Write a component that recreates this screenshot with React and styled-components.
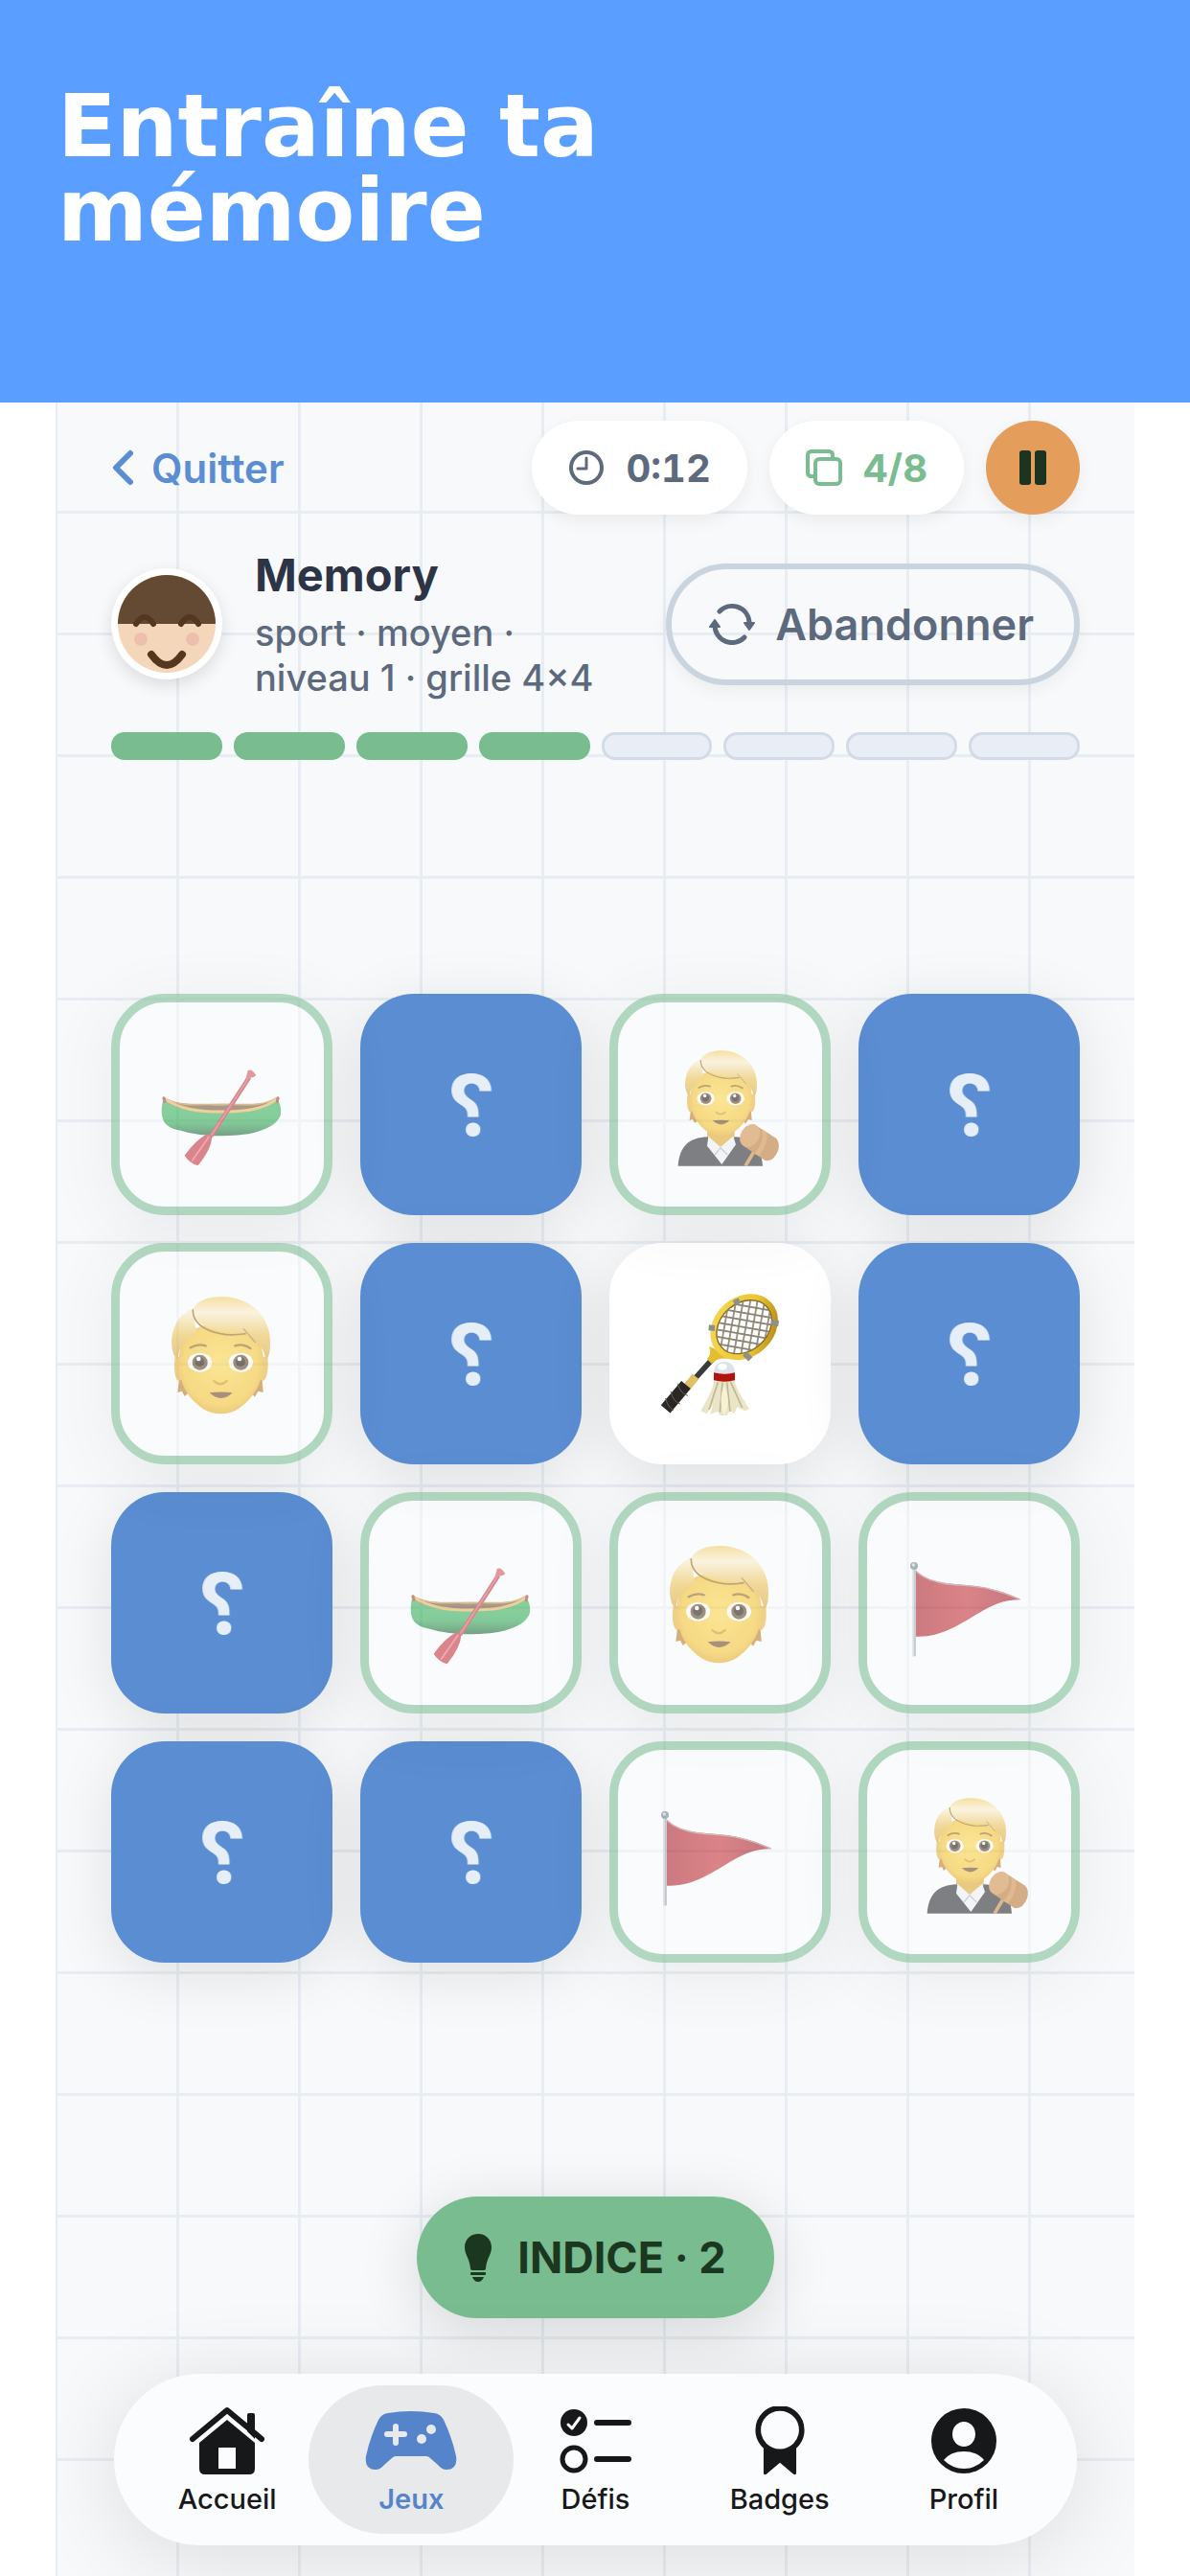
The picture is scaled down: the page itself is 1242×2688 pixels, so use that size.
import React from "react";
import styled, { createGlobalStyle } from "styled-components";

const CARDS = [
  { id: 1, face: "canoe", status: "matched" },
  { id: 2, face: "ball", status: "hidden" },
  { id: 3, face: "judge", status: "matched" },
  { id: 4, face: "medal", status: "hidden" },
  { id: 5, face: "person", status: "matched" },
  { id: 6, face: "ski", status: "hidden" },
  { id: 7, face: "badminton", status: "open" },
  { id: 8, face: "medal", status: "hidden" },
  { id: 9, face: "ball", status: "hidden" },
  { id: 10, face: "canoe", status: "matched" },
  { id: 11, face: "person", status: "matched" },
  { id: 12, face: "flag", status: "matched" },
  { id: 13, face: "badminton", status: "hidden" },
  { id: 14, face: "ski", status: "hidden" },
  { id: 15, face: "flag", status: "matched" },
  { id: 16, face: "judge", status: "matched" }
];

const TABS = [
  { label: "Accueil", Icon: HomeIcon },
  { label: "Jeux", Icon: GamepadIcon, active: true },
  { label: "Défis", Icon: ChecklistIcon },
  { label: "Badges", Icon: RosetteIcon },
  { label: "Profil", Icon: ProfileIcon }
];

const PAIRS = 8;
const FOUND = 4;

export default function App() {
  return (
    <SPage>
      <GlobalStyle />
      <SBanner>
        <h1>
          Entraîne ta
          <br />
          mémoire
        </h1>
      </SBanner>
      <SScreen>
        <STopBar>
          <SBackBtn type="button">
            <ChevronIcon />
            Quitter
          </SBackBtn>
          <SStats>
            <SPill>
              <ClockIcon />
              0:12
            </SPill>
            <SPill $green>
              <CopyIcon />
              4/8
            </SPill>
            <SPauseBtn type="button" aria-label="Pause">
              <PauseIcon />
            </SPauseBtn>
          </SStats>
        </STopBar>
        <SGameInfo>
          <SAvatar>
            <AvatarFace />
          </SAvatar>
          <SInfoText>
            <h2>Memory</h2>
            <p>
              sport · moyen ·
              <br />
              niveau 1 · grille 4×4
            </p>
          </SInfoText>
          <SQuitBtn type="button">
            <RefreshIcon />
            Abandonner
          </SQuitBtn>
        </SGameInfo>
        <SProgress
          role="progressbar"
          aria-label="Paires trouvées"
          aria-valuemin={0}
          aria-valuemax={PAIRS}
          aria-valuenow={FOUND}
        >
          {Array.from({ length: PAIRS }, (_, i) => (
            <SStep key={i} $done={i < FOUND} />
          ))}
        </SProgress>
        <SBoardArea>
          <SBoard>
            {CARDS.map(card => (
              <MemoryCard key={card.id} {...card} />
            ))}
          </SBoard>
        </SBoardArea>
        <SHintBtn type="button">
          <BulbIcon />
          INDICE · 2
        </SHintBtn>
        <STabBar>
          {TABS.map(({ label, Icon, active }) => (
            <STab
              key={label}
              type="button"
              $active={active}
              aria-current={active ? "page" : undefined}
            >
              <Icon />
              {label}
            </STab>
          ))}
        </STabBar>
      </SScreen>
    </SPage>
  );
}

function MemoryCard({ face, status }) {
  if (status === "hidden") {
    return (
      <SHiddenCard type="button">
        <span>?</span>
      </SHiddenCard>
    );
  }
  const Picture = PICTURES[face];
  return (
    <SOpenCard type="button" aria-label={face} $matched={status === "matched"}>
      <Picture />
    </SOpenCard>
  );
}

/* ---------- card pictures ---------- */

function CanoePicture() {
  return (
    <svg viewBox="0 0 384 384">
      <defs>
        <linearGradient id="hull" x1="0" y1="0" x2="0" y2="1">
          <stop offset="0" stopColor="#2fae54" />
          <stop offset="0.6" stopColor="#27a84c" />
          <stop offset="1" stopColor="#0b5a26" />
        </linearGradient>
      </defs>
      <path d="M8 176C70 196 300 200 366 176L340 206Q190 226 40 206Z" fill="#6d4a2b" />
      <path
        d="M6 178C0 204 0 232 12 248C28 266 44 268 62 272C130 294 258 294 312 272C346 262 364 246 374 226C378 206 374 190 366 178C310 206 260 216 190 216C116 216 56 208 6 178Z"
        fill="url(#hull)"
      />
      <path d="M10 170C60 198 110 190 190 190C270 190 318 198 362 170" fill="none" stroke="#c48a34" strokeWidth="5" />
      <path d="M9 172C58 206 120 213 190 213C262 213 322 206 366 172" fill="none" stroke="#e9b04e" strokeWidth="9" strokeLinecap="round" />
      <path d="M9 170L12 182M366 170L364 182" stroke="#8c3a2a" strokeWidth="9" strokeLinecap="round" />
      <path d="M276 106L156 290" stroke="#b92d38" strokeWidth="14" />
      <path d="M274 108L158 286" stroke="#e0606a" strokeWidth="4" />
      <path d="M266 108L272 84Q286 78 298 100Q290 108 276 108L270 116Z" fill="#d04a55" />
      <path d="M146 282L160 292Q158 330 116 382Q88 374 74 350Q108 302 146 282Z" fill="#c32532" />
      <path d="M150 292L98 366" stroke="#e5717a" strokeWidth="5" strokeLinecap="round" />
    </svg>
  );
}

function Head() {
  return (
    <g>
      <defs>
        <radialGradient id="skin" cx="0.5" cy="0.45" r="0.6">
          <stop offset="0" stopColor="#ffd640" />
          <stop offset="0.75" stopColor="#f6c024" />
          <stop offset="1" stopColor="#dc9a12" />
        </radialGradient>
        <linearGradient id="hair" x1="0" y1="0" x2="0" y2="1">
          <stop offset="0" stopColor="#f4cd5c" />
          <stop offset="0.25" stopColor="#fdeecb" />
          <stop offset="0.6" stopColor="#edc04a" />
          <stop offset="1" stopColor="#d9a12c" />
        </linearGradient>
      </defs>
      <path d="M58 262L52 312L66 308L74 324L96 306ZM316 262L320 312L304 308L294 326L276 306Z" fill="#b87414" />
      <path d="M44 200C38 240 44 272 56 276L68 270L66 200ZM334 200C338 240 332 272 320 276L308 270L310 200Z" fill="#eab02c" />
      <path
        d="M188 96C110 96 56 130 56 212C56 296 92 334 130 362C166 384 210 384 244 362C284 332 320 292 320 212C320 130 266 96 188 96Z"
        fill="url(#skin)"
      />
      <path
        d="M98 52C116 22 150 12 190 12C280 12 344 76 342 158C342 190 336 206 328 208C324 180 312 162 294 152L288 138L290 158L266 128C200 128 130 110 108 82C102 96 112 112 112 130L102 126L102 142L86 140C66 158 56 178 52 208C34 196 32 160 34 144C38 96 64 62 98 52Z"
        fill="url(#hair)"
      />
      <path d="M100 52C98 92 134 118 186 128C214 134 240 132 266 128" fill="none" stroke="#8e6216" strokeWidth="5" />
      <path d="M258 112L296 156" stroke="#a87820" strokeWidth="4" />
      <path d="M92 172Q116 158 140 166M232 166Q256 158 280 174" fill="none" stroke="#8a5c10" strokeWidth="7" strokeLinecap="round" />
      <Eye cx={122} />
      <Eye cx={250} />
      <path d="M166 276Q186 296 206 276" fill="none" stroke="#cf8f10" strokeWidth="7" strokeLinecap="round" />
      <path d="M152 313Q188 308 224 313Q206 330 188 330Q170 330 152 313Z" fill="#6b3a18" />
    </g>
  );
}

function Eye({ cx }) {
  return (
    <>
      <ellipse cx={cx} cy="218" rx="38" ry="30" fill="#fffdf4" />
      <circle cx={cx} cy="218" r="24" fill="#5a3a14" />
      <circle cx={cx - 1} cy="216" r="15" fill="#120800" />
      <circle cx={cx - 4} cy="207" r="7" fill="#fff" />
    </>
  );
}

function PersonPicture() {
  return (
    <svg viewBox="0 0 384 384">
      <Head />
    </svg>
  );
}

function JudgePicture() {
  return (
    <svg viewBox="0 0 384 384">
      <path d="M150 260H236V320L192 370L150 320Z" fill="#dfa31c" />
      <path d="M59 383C64 322 92 294 152 292L196 376L236 292C296 294 320 324 324 383Z" fill="#1c1c20" />
      <path d="M154 290L192 324L232 290L240 316L196 378L150 320Z" fill="#eef0f4" />
      <path d="M192 326L174 348M192 326L214 348" stroke="#a9adb8" strokeWidth="4" />
      <g transform="translate(57 13) scale(0.728)">
        <Head />
      </g>
      <path d="M298 336L270 383" stroke="#c98232" strokeWidth="11" />
      <path d="M300 254L366 296Q380 310 372 336Q358 370 332 366L266 322Z" fill="#b8702a" />
      <path d="M322 268L336 278Q344 310 312 352L298 344Q330 310 322 268Z" fill="#cf8538" />
      <ellipse cx="284" cy="288" rx="29" ry="38" transform="rotate(32 284 288)" fill="#d08a3e" />
    </svg>
  );
}

function BadmintonPicture() {
  return (
    <svg viewBox="0 0 384 384">
      <defs>
        <pattern id="strings" width="22" height="22" patternUnits="userSpaceOnUse" patternTransform="rotate(52)">
          <path d="M0 11H22M11 0V22" stroke="#8d8573" strokeWidth="5" />
        </pattern>
        <linearGradient id="frame" x1="0" y1="0" x2="1" y2="1">
          <stop offset="0" stopColor="#f6d858" />
          <stop offset="0.6" stopColor="#ecc634" />
          <stop offset="1" stopColor="#a67c12" />
        </linearGradient>
      </defs>
      <path d="M170 204L98 284" stroke="#3a3a3a" strokeWidth="17" />
      <path d="M156 168Q166 192 150 208L164 222Q180 202 216 206L200 186Z" fill="#e5bd30" />
      <path d="M114 262L88 294" stroke="#e0c066" strokeWidth="26" />
      <path d="M84 288L20 364" stroke="#2b2725" strokeWidth="38" strokeLinejoin="round" />
      <path d="M58 284Q66 316 90 322M36 308Q44 342 66 348M20 330Q26 356 44 368" fill="none" stroke="#6a625c" strokeWidth="3" />
      <g transform="rotate(-42 266 107)">
        <ellipse cx="266" cy="107" rx="110" ry="89" fill="#fff" />
        <ellipse cx="266" cy="107" rx="105" ry="84" fill="none" stroke="url(#frame)" strokeWidth="19" />
        <ellipse cx="266" cy="107" rx="95" ry="74" fill="none" stroke="#84671b" strokeWidth="4" />
      </g>
      <ellipse cx="266" cy="107" rx="94" ry="73" transform="rotate(-42 266 107)" fill="url(#strings)" />
      <path d="M234 32L252 24M351 92L374 96M155 109L174 111M268 190L286 208" stroke="#8f9189" strokeWidth="18" />
      <path d="M172 276C166 310 142 346 130 370L148 378L168 352L160 380L184 372L190 384L212 384L222 370L236 378L244 358L268 370L282 364C262 330 244 306 236 276Z" fill="#e9e5c6" />
      <path d="M184 280L156 366M198 280L190 374M212 280L222 372M224 280L260 360" stroke="#bdb997" strokeWidth="5" />
      <path d="M204 290C190 320 190 350 204 384C220 350 218 320 204 290Z" fill="#f7f3d2" />
      <path d="M171 254C170 228 184 215 204 215C224 215 238 228 237 254Z" fill="#dfe2ea" />
      <ellipse cx="198" cy="232" rx="14" ry="10" fill="#fff" />
      <path d="M171 250Q204 258 237 250V274Q204 282 171 274Z" fill="#b3130f" />
    </svg>
  );
}

function FlagPicture() {
  return (
    <svg viewBox="0 0 384 384">
      <defs>
        <linearGradient id="cloth" x1="0" y1="0" x2="1" y2="0">
          <stop offset="0" stopColor="#a8141c" />
          <stop offset="0.5" stopColor="#c4242b" />
          <stop offset="1" stopColor="#981018" />
        </linearGradient>
      </defs>
      <path
        d="M24 90C50 114 80 124 124 130C180 136 220 136 256 146C296 156 326 166 353 181C300 180 268 196 232 216C172 250 108 300 24 296Z"
        fill="url(#cloth)"
      />
      <path d="M26 94C50 116 80 126 124 132C180 138 220 138 256 148C296 158 322 168 346 179" fill="none" stroke="#b88084" strokeWidth="4" />
      <path d="M13 80H24V358H13Z" fill="#a4a9b0" />
      <path d="M15 84V358" stroke="#dfe2e6" strokeWidth="4" />
      <circle cx="18" cy="75" r="12" fill="#6d7a84" />
      <circle cx="16" cy="72" r="5" fill="#d5dbe0" />
    </svg>
  );
}

const PICTURES = {
  canoe: CanoePicture,
  person: PersonPicture,
  judge: JudgePicture,
  badminton: BadmintonPicture,
  flag: FlagPicture
};

function AvatarFace() {
  return (
    <svg width="102" height="102" viewBox="0 0 102 102">
      <clipPath id="avatarClip">
        <circle cx="51" cy="51" r="51" />
      </clipPath>
      <g clipPath="url(#avatarClip)">
        <rect width="102" height="102" fill="#f4d6ba" />
        <rect width="102" height="51" fill="#644a33" />
      </g>
      <g fill="none" stroke="#553720" strokeLinecap="round">
        <path d="M19 51Q28 37 37 51M66 51Q75 37 84 51" strokeWidth="6" />
        <path d="M35 83Q51 105 67 83" strokeWidth="8" />
      </g>
      <circle cx="24" cy="67" r="7" fill="#efbfae" />
      <circle cx="78" cy="67" r="7" fill="#efbfae" />
    </svg>
  );
}

/* ---------- icons ---------- */

function ChevronIcon() {
  return (
    <svg width="24" height="38" viewBox="0 0 24 38" fill="none" stroke="currentColor" strokeWidth="6" strokeLinecap="round" strokeLinejoin="round">
      <path d="M20 4L5 19L20 34" />
    </svg>
  );
}

function ClockIcon() {
  return (
    <svg width="38" height="38" viewBox="0 0 38 38" fill="none" stroke="currentColor" strokeLinecap="round" strokeLinejoin="round">
      <circle cx="19" cy="19" r="16" strokeWidth="4" />
      <path d="M19 9V20H10" strokeWidth="3" />
    </svg>
  );
}

function CopyIcon() {
  return (
    <svg width="38" height="38" viewBox="0 0 38 38" fill="none" stroke="currentColor" strokeWidth="4" strokeLinejoin="round">
      <rect x="10" y="10" width="26" height="26" rx="4" />
      <path d="M10 28H6Q2 28 2 24V6Q2 2 6 2H24Q28 2 28 6V10" />
    </svg>
  );
}

function PauseIcon() {
  return (
    <svg width="28" height="36" viewBox="0 0 28 36" fill="currentColor">
      <rect width="12" height="36" rx="3" />
      <rect x="16" width="12" height="36" rx="3" />
    </svg>
  );
}

function RefreshIcon() {
  return (
    <svg width="50" height="44" viewBox="0 0 50 44" fill="none" stroke="currentColor" strokeWidth="5" strokeLinecap="round">
      <path d="M12 9A18 18 0 0 1 43 20M38 36A18 18 0 0 1 7 24" />
      <path d="M38 21H48L43 28ZM2 25H12L7 18Z" fill="currentColor" strokeWidth="2" strokeLinejoin="round" />
    </svg>
  );
}

function BulbIcon() {
  return (
    <svg width="28" height="50" viewBox="0 0 28 50" fill="currentColor">
      <path d="M14 0C22 0 28 6 28 14C28 22 23 25 22 36Q22 38 20 38H8Q6 38 6 36C5 25 0 22 0 14C0 6 6 0 14 0Z" />
      <rect x="6" y="40" width="16" height="3" rx="1" />
      <path d="M8 45H20Q18 50 14 50T8 45Z" />
    </svg>
  );
}

function HomeIcon() {
  return (
    <svg width="80" height="72" viewBox="0 0 80 72">
      <path d="M61 26V9Q61 7 63 7H67Q69 7 69 9V34Z" fill="currentColor" />
      <path d="M4 34L40 4L76 34" fill="none" stroke="currentColor" strokeWidth="6" strokeLinecap="round" strokeLinejoin="round" />
      <path
        fillRule="evenodd"
        d="M40 14L69 38V65Q69 71 63 71H17Q11 71 11 65V38ZM31 43V65H49V43Z"
        fill="currentColor"
      />
    </svg>
  );
}

function GamepadIcon() {
  return (
    <svg width="96" height="72" viewBox="0 0 96 72">
      <path
        d="M24 7Q48 3 72 7Q79 8 82 14Q91 33 95 52Q97 66 85 66Q80 66 76 61L68 54Q66 52 64 52H32Q30 52 28 54L20 61Q16 66 11 66Q-1 66 1 52Q5 33 14 14Q17 8 24 7Z"
        fill="currentColor"
      />
      <g fill="none" stroke="#e8e9eb" strokeWidth="6" strokeLinecap="round">
        <path d="M32 21V38M23 29H41" />
      </g>
      <circle cx="69" cy="24" r="5" fill="#e8e9eb" />
      <circle cx="59" cy="34" r="5" fill="#e8e9eb" />
    </svg>
  );
}

function ChecklistIcon() {
  return (
    <svg width="76" height="72" viewBox="0 0 76 72" fill="none" stroke="currentColor" strokeLinecap="round" strokeLinejoin="round">
      <circle cx="15" cy="17" r="14" fill="currentColor" stroke="none" />
      <path d="M9 19L13 23L21 12" stroke="#fff" strokeWidth="3" />
      <path d="M39 17H72M39 55H72" strokeWidth="6" />
      <circle cx="15" cy="55" r="12" strokeWidth="5" />
    </svg>
  );
}

function RosetteIcon() {
  return (
    <svg width="54" height="72" viewBox="0 1 54 76">
      <path d="M9 42H45V74Q45 78 41 75L27 63L13 75Q9 78 9 74Z" fill="currentColor" />
      <circle cx="27" cy="27" r="24" fill="#fbfcfe" stroke="currentColor" strokeWidth="6" />
    </svg>
  );
}

function ProfileIcon() {
  return (
    <svg width="68" height="72" viewBox="0 0 68 72">
      <circle cx="34" cy="36" r="34" fill="currentColor" />
      <ellipse cx="34" cy="29" rx="12" ry="13" fill="#fbfcfe" />
      <path d="M13 56Q20 47 34 47T55 56Q46 65 34 65T13 56Z" fill="#fbfcfe" />
    </svg>
  );
}

/* ---------- styles ---------- */

const GlobalStyle = createGlobalStyle`
  * {
    box-sizing: border-box;
  }
  body {
    margin: 0;
    background: #fff;
    font-family: Inter, "Liberation Sans", sans-serif;
  }
  h1, h2, p {
    margin: 0;
  }
  button {
    padding: 0;
    border: none;
    background: none;
    font-family: inherit;
    cursor: pointer;
  }
  svg {
    display: block;
    flex-shrink: 0;
  }
`;

const SPage = styled.div`
  display: flex;
  flex-direction: column;
  min-height: 100vh;
`;

const SBanner = styled.header`
  min-height: 420px;
  padding: 88px 60px;
  background: #5a9fff;
  h1 {
    color: #fff;
    font-family: "DejaVu Sans", sans-serif;
    font-size: 90px;
    font-weight: 700;
    line-height: 88px;
  }
`;

const SScreen = styled.main`
  flex: 1;
  display: flex;
  flex-direction: column;
  margin: 0 58px;
  padding: 19px 57px 32px 58px;
  overflow: hidden;
  background-color: #f7f9fb;
  background-image: linear-gradient(#e7edf2 3px, transparent 3px),
    linear-gradient(90deg, #e7edf2 3px, transparent 3px);
  background-size: 127px 127px;
  background-position: -1px 113px;
`;

const STopBar = styled.div`
  display: flex;
  align-items: center;
  justify-content: space-between;
`;

const SBackBtn = styled.button`
  display: flex;
  align-items: center;
  gap: 18px;
  color: #5b8dd2;
  font-size: 42px;
  font-weight: 600;
`;

const SStats = styled.div`
  display: flex;
  gap: 23px;
`;

const SPill = styled.div`
  display: flex;
  align-items: center;
  gap: 22px;
  height: 98px;
  padding: 0 38px;
  border-radius: 49px;
  background: #fff;
  box-shadow: 0 6px 18px rgba(0, 0, 0, 0.06);
  color: ${props => (props.$green ? "#79bc90" : "#5d6a7d")};
  font-size: 40px;
  font-weight: 700;
  font-variant-numeric: tabular-nums;
`;

const SPauseBtn = styled.button`
  display: flex;
  align-items: center;
  justify-content: center;
  width: 98px;
  height: 98px;
  border-radius: 50%;
  background: #e49d5b;
  box-shadow: 0 6px 18px rgba(0, 0, 0, 0.06);
  color: #1d3520;
`;

const SGameInfo = styled.section`
  display: flex;
  align-items: center;
  margin-top: 34px;
`;

const SAvatar = styled.div`
  padding: 7px;
  border-radius: 50%;
  background: #fff;
  box-shadow: 0 6px 18px rgba(0, 0, 0, 0.12);
`;

const SInfoText = styled.div`
  flex: 1;
  margin-left: 34px;
  h2 {
    margin-bottom: 8px;
    color: #2c3446;
    font-size: 47px;
    font-weight: 700;
    line-height: 58px;
  }
  p {
    color: #5d6a7d;
    font-size: 38px;
    font-weight: 500;
    line-height: 47px;
    white-space: nowrap;
  }
`;

const SQuitBtn = styled.button`
  display: flex;
  align-items: center;
  gap: 20px;
  height: 127px;
  padding: 0 42px 0 38px;
  border: 6px solid #c9d4df;
  border-radius: 64px;
  box-shadow: 0 6px 18px rgba(0, 0, 0, 0.05);
  color: #5d6a7d;
  font-size: 45px;
  font-weight: 600;
`;

const SProgress = styled.div`
  display: flex;
  gap: 12px;
  margin-top: 33px;
`;

const SStep = styled.div`
  flex: 1;
  height: 29px;
  border: 3px solid ${props => (props.$done ? "#79bc90" : "#d3dbe6")};
  border-radius: 14px;
  background: ${props => (props.$done ? "#79bc90" : "#e9eef6")};
`;

const SBoardArea = styled.section`
  flex: 1;
  display: flex;
  align-items: center;
`;

const SBoard = styled.div`
  flex: 1;
  display: grid;
  grid-template-columns: repeat(4, 1fr);
  gap: 29px;
`;

const SCard = styled.button`
  display: flex;
  align-items: center;
  justify-content: center;
  aspect-ratio: 1;
  border-radius: 56px;
  box-shadow: 0 12px 64px rgba(0, 0, 0, 0.1);
`;

const SHiddenCard = styled(SCard)`
  background: #5b8dd2;
  color: #e6eef8;
  font-size: 88px;
  font-weight: 700;
  span {
    transform: rotateY(180deg);
  }
`;

const SOpenCard = styled(SCard)`
  border: 9px solid ${props => (props.$matched ? "#79bc90" : "#fff")};
  background: ${props => (props.$matched ? "rgba(255, 255, 255, 0.8)" : "#fff")};
  opacity: ${props => (props.$matched ? 0.55 : 1)};
  svg {
    width: 128px;
    height: 128px;
  }
`;

const SHintBtn = styled.button`
  align-self: center;
  display: flex;
  align-items: center;
  gap: 27px;
  height: 127px;
  padding: 0 50px;
  border-radius: 64px;
  background: #79bc90;
  box-shadow: 0 12px 64px rgba(0, 0, 0, 0.14);
  color: #1b3720;
  font-size: 45px;
  font-weight: 700;
`;

const STabBar = styled.nav`
  display: flex;
  margin: 58px 3px 0;
  padding: 12px 22px;
  border-radius: 90px;
  background: #fbfcfe;
  box-shadow: 0 12px 96px rgba(0, 0, 0, 0.12);
`;

const STab = styled.button`
  flex: 1 1 0;
  display: flex;
  flex-direction: column;
  align-items: center;
  gap: 8px;
  height: 155px;
  margin: 0 -11px;
  padding-top: 22px;
  border-radius: 78px;
  background: ${props => (props.$active ? "#e8e9eb" : "transparent")};
  color: ${props => (props.$active ? "#5584ca" : "#17181a")};
  font-size: 29px;
  font-weight: ${props => (props.$active ? 600 : 500)};
  line-height: 34px;
`;
